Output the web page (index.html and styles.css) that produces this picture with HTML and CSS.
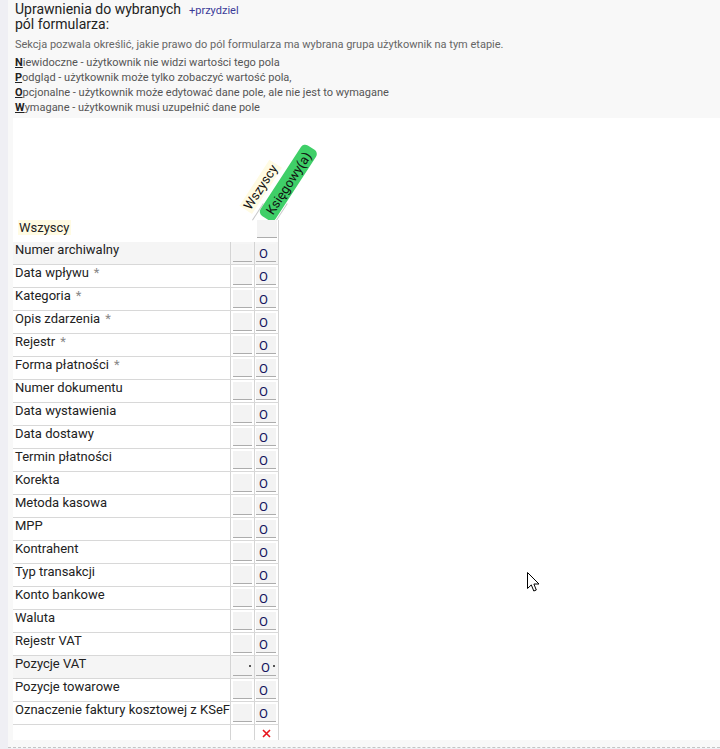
FILE: index.html
```html
<!DOCTYPE html>
<html>
  <head>
    <meta charset="utf-8" />
    <title>Uprawnienia do pól formularza</title>
    <link rel="stylesheet" href="styles.css">
  </head>
  <body>
    <div class="panel">
      <div class="intro">
        <div class="intro-head">
          <div class="intro-title">Uprawnienia do wybranych pól formularza:</div>
          <a class="assign-link" href="#">+przydziel</a>
        </div>
        <p class="intro-desc">Sekcja pozwala określić, jakie prawo do pól formularza ma wybrana grupa użytkownik na tym etapie.</p>
        <ul class="legend">
          <li><u>N</u>iewidoczne - użytkownik nie widzi wartości tego pola</li>
          <li><u>P</u>odgląd - użytkownik może tylko zobaczyć wartość pola,</li>
          <li><u>O</u>pcjonalne - użytkownik może edytować dane pole, ale nie jest to wymagane</li>
          <li><u>W</u>ymagane - użytkownik musi uzupełnić dane pole</li>
        </ul>
      </div>

      <div class="matrix">
        <!-- nagłówki kolumn (grupy) -->
        <div class="matrix-head">
          <div class="head-spacer"></div>
          <div class="head-col">
            <span class="head-line"></span>
            <span class="head-label label-all">Wszyscy</span>
          </div>
          <div class="head-col">
            <span class="head-line"></span>
            <span class="head-label label-group">Księgowy(a)</span>
          </div>
        </div>

        <div class="row row-all">
          <div class="lbl"><span class="all-tag">Wszyscy</span></div>
          <div class="c1"></div>
          <div class="c2"><span class="box"></span></div>
        </div>

        <div id="rows"></div>

        <div class="row row-last">
          <div class="lbl"></div>
          <div class="c1"></div>
          <div class="c2">
            <svg class="remove" width="9" height="9" viewBox="0 0 9 9">
              <path d="M1 1 L8 8 M8 1 L1 8" stroke="#e8141c" stroke-width="1.6" fill="none" />
            </svg>
          </div>
        </div>
      </div>
    </div>

    <svg class="cursor" width="14" height="22" viewBox="0 0 14 22">
      <path d="M0.5 0.5 L0.5 16.5 L4.3 12.9 L6.8 19 L9.3 18 L6.9 12 L12 12 Z" fill="#fff" stroke="#000" stroke-width="1" stroke-linejoin="round" />
    </svg>

    <script>
      var fields = [
        ["Numer archiwalny", false, "grey"],
        ["Data wpływu", true],
        ["Kategoria", true],
        ["Opis zdarzenia", true],
        ["Rejestr", true],
        ["Forma płatności", true],
        ["Numer dokumentu", false],
        ["Data wystawienia", false],
        ["Data dostawy", false],
        ["Termin płatności", false],
        ["Korekta", false],
        ["Metoda kasowa", false],
        ["MPP", false],
        ["Kontrahent", false],
        ["Typ transakcji", false],
        ["Konto bankowe", false],
        ["Waluta", false],
        ["Rejestr VAT", false],
        ["Pozycje VAT", false, "grey sub"],
        ["Pozycje towarowe", false],
        ["Oznaczenie faktury kosztowej z KSeF", false]
      ];

      var html = "";
      fields.forEach(function (f) {
        var star = f[1] ? '<span class="star">*</span>' : "";
        html +=
          '<div class="row ' + (f[2] || "") + '">' +
          '<div class="lbl">' + f[0] + star + "</div>" +
          '<div class="c1"><span class="box"></span></div>' +
          '<div class="c2"><span class="box">O</span></div>' +
          "</div>";
      });
      document.getElementById("rows").innerHTML = html;
    </script>
  </body>
</html>
```

FILE: styles.css
```css
body {
  margin: 0;
  background-color: #efeff4;
  font-family: Roboto, "Liberation Sans", sans-serif;
  color: #222;
}

.panel {
  margin-left: 8px;
  background-color: #f8f8f8;
  padding-bottom: 7px;
  border-bottom: 1px dashed #c4c4c4;
}

/* opis sekcji */
.intro {
  padding: 2px 0 3px 7px;
}
.intro-head {
  display: flex;
  align-items: baseline;
}
.intro-title {
  width: 168px;
  font-size: 14px;
  line-height: 15px;
  color: #222;
}
.assign-link {
  margin-left: 6px;
  font-size: 11px;
  color: #3b3b98;
  text-decoration: none;
}
.intro-desc {
  margin: 5px 0 0;
  font-size: 11px;
  line-height: 15px;
  color: #666;
}
.legend {
  list-style: none;
  margin: 3px 0 0;
  padding: 0;
  font-size: 11px;
  line-height: 15px;
  color: #555;
}
.legend u {
  color: #222;
  font-weight: bold;
}

/* tabela uprawnień */
.matrix {
  margin-left: 5px;
  background-color: #fff;
}

.matrix-head {
  display: flex;
  height: 102px;
}
.head-spacer {
  width: 218px;
}
.head-col {
  position: relative;
  width: 24px;
}
.head-line {
  position: absolute;
  left: 21px;
  bottom: 0;
  width: 1px;
  height: 20px;
  background-color: #c8c8c8;
  transform-origin: bottom left;
  transform: rotate(33deg);
}
.head-label {
  position: absolute;
  white-space: nowrap;
  font-size: 13px;
  line-height: 15px;
  color: #111;
  transform-origin: bottom left;
  transform: rotate(-57deg);
}
.label-all {
  left: 21px;
  bottom: 6px;
  padding: 0 2px;
  background-color: #fffbe3;
}
.label-group {
  left: 18px;
  bottom: -3px;
  padding: 2px 6px 1px;
  background-color: #3fcf68;
  border-radius: 5px;
}

.row {
  display: flex;
  width: 266px;
  height: 22px;
  border-bottom: 1px solid #d8d8d8;
}
.row.grey {
  background-color: #f5f5f5;
}
.lbl {
  width: 215px;
  padding: 0 0 0 2px;
  border-right: 1px solid #d4d4d4;
  font-size: 13px;
  line-height: 15px;
  white-space: nowrap;
  overflow: hidden;
}
.c1,
.c2 {
  width: 23px;
  border-right: 1px solid #d4d4d4;
}
.star {
  margin-left: 5px;
  color: #888;
}

.box {
  position: relative;
  display: block;
  height: 17px;
  margin-top: 2px;
  background-color: #f3f3f3;
  border-bottom: 1px solid #acacac;
  font-size: 13px;
  line-height: 19px;
  color: #14145e;
}
.c1 .box {
  width: 19px;
  margin-left: 2px;
}
.c2 .box {
  width: 17px;
  margin-left: 1px;
  padding-left: 3px;
}
.row.sub .c2 .box {
  width: 15px;
  padding-left: 5px;
}
.row.sub .box::after {
  content: "";
  position: absolute;
  right: 1px;
  top: 7px;
  width: 2px;
  height: 2px;
  background-color: #555;
}

/* wiersz "Wszyscy" */
.row-all {
  border-bottom: none;
  background-color: #fff;
}
.row-all .lbl,
.row-all .c1 {
  border-right-color: transparent;
}
.row-all .lbl {
  padding: 0 0 0 5px;
  width: 212px;
}
.all-tag {
  display: inline-block;
  margin-top: -1px;
  padding: 0 1px;
  background-color: #fffbe3;
}
.row-all .c2 .box {
  margin-top: 0;
  margin-left: 2px;
  width: 17px;
  height: 17px;
}

.row-last {
  height: 15px;
  border-bottom: none;
}
.remove {
  display: block;
  margin: 4px 0 0 7px;
}

.cursor {
  position: absolute;
  left: 527px;
  top: 572px;
}
```
